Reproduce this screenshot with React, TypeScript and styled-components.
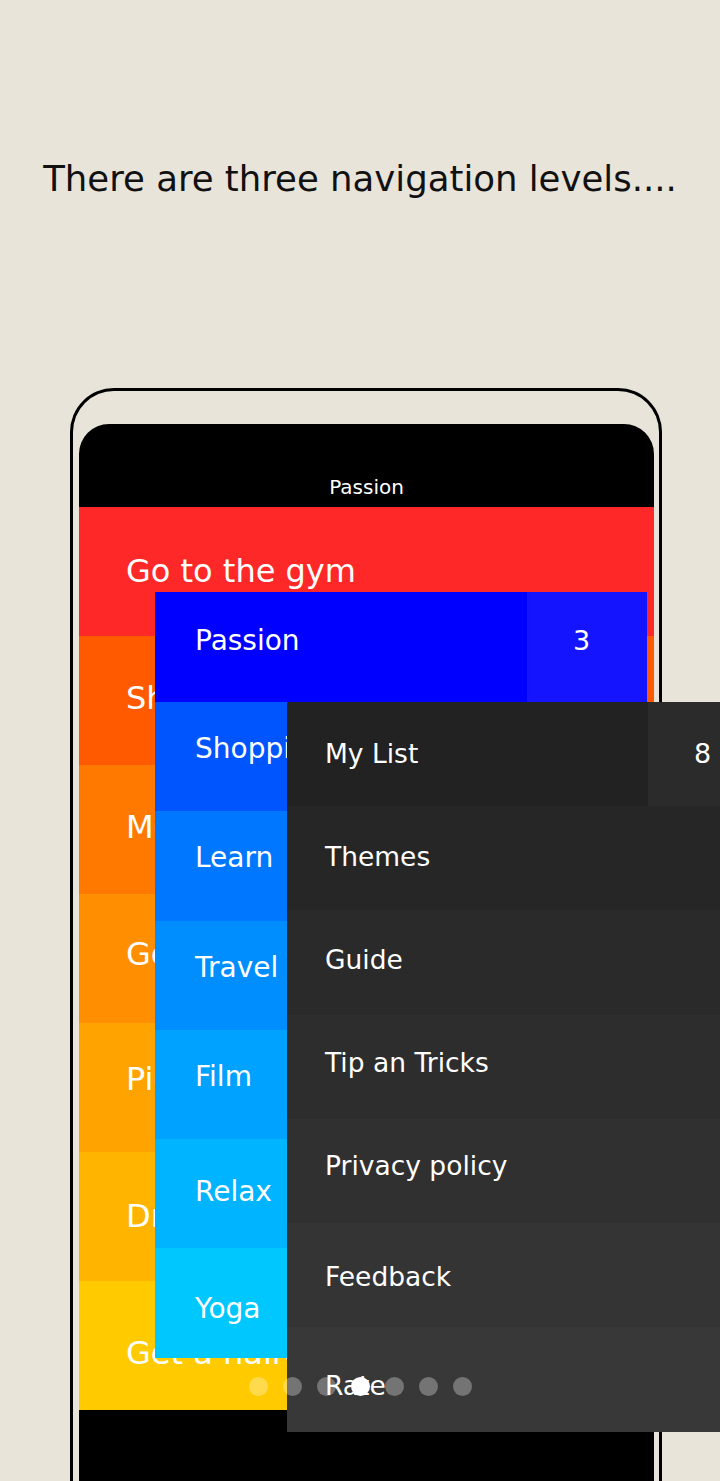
import React from "react";
import styled, { createGlobalStyle } from "styled-components";

const GlobalStyle = createGlobalStyle`
  html, body {
    margin: 0;
    padding: 0;
    background: #e9e4d9;
  }
  body {
    font-family: "DejaVu Sans", "Noto Sans", sans-serif;
  }
`;

// lift: how far the label sits above the row's middle (the lists are mid-slide)
const goals = [
  { label: "Go to the gym", color: "#ff2828", lift: 1 },
  { label: "Shopping list", color: "#ff5a00", lift: 3 },
  { label: "Movies to see", color: "#ff7800", lift: 3 },
  { label: "Go hiking", color: "#ff8e00", lift: 5 },
  { label: "Pick flowers", color: "#ffa300", lift: 9 },
  { label: "Drink water", color: "#ffb500", lift: 1 },
  { label: "Get a haircut", color: "#ffcb00", lift: -7 },
];

const categories = [
  { label: "Shopping", color: "#0055ff", lift: 8 },
  { label: "Learn", color: "#0077ff", lift: 8 },
  { label: "Travel", color: "#008eff", lift: 8 },
  { label: "Film", color: "#00a2ff", lift: 8 },
  { label: "Relax", color: "#00b4ff", lift: 2 },
  { label: "Yoga", color: "#00c8ff", lift: -5 },
];

const menu = [
  { label: "Themes", color: "#262626", lift: 2 },
  { label: "Guide", color: "#2a2a2a", lift: 3 },
  { label: "Tip an Tricks", color: "#2d2d2d", lift: 4 },
  { label: "Privacy policy", color: "#303030", lift: 6 },
  { label: "Feedback", color: "#343434", lift: -1 },
  { label: "Rate", color: "#383838", lift: -6 },
];

const App = () => {
  return (
    <Page>
      <GlobalStyle />
      <Title>There are three navigation levels....</Title>

      <PhoneFrame>
        <Screen>
          <ScreenHeader>Passion</ScreenHeader>
          {goals.map((g) => (
            <GoalRow key={g.label} $bg={g.color} $lift={g.lift}>
              {g.label}
            </GoalRow>
          ))}
          <ScreenFiller />
        </Screen>
      </PhoneFrame>

      <CategoryPanel>
        <CategoryHead>
          <CategoryLabel>Passion</CategoryLabel>
          <CountCell $bg="#1414ff" $lift={7}>
            3
          </CountCell>
        </CategoryHead>
        {categories.map((c) => (
          <CategoryRow key={c.label} $bg={c.color} $lift={c.lift}>
            {c.label}
          </CategoryRow>
        ))}
      </CategoryPanel>

      <MenuPanel>
        <MenuHead>
          <MenuLabel>My List</MenuLabel>
          <CountCell $bg="#2b2b2b" $lift={1}>
            8
          </CountCell>
        </MenuHead>
        {menu.map((m) => (
          <MenuRow key={m.label} $bg={m.color} $lift={m.lift}>
            {m.label}
          </MenuRow>
        ))}
      </MenuPanel>

      <Dots>
        {[0, 1, 2, 3, 4, 5, 6].map((i) => (
          <Dot key={i} $active={i === 3} />
        ))}
      </Dots>
    </Page>
  );
};

export default App;

const liftPadding = (lift: number) =>
  lift >= 0 ? `padding-bottom: ${lift * 2}px;` : `padding-top: ${-lift * 2}px;`;

const Page = styled.div`
  position: relative;
  width: 720px;
  height: 1481px;
  overflow: hidden;
  background: #e9e4d9;
  display: flex;
  flex-direction: column;
`;

const Title = styled.h1`
  margin: 0;
  padding-top: 155px;
  height: 48px;
  line-height: 48px;
  text-align: center;
  font-size: 35.5px;
  font-weight: 400;
  color: #111;
`;

const PhoneFrame = styled.div`
  margin: 185px 0 0 70px;
  flex: 1;
  border: 3px solid #000;
  border-bottom: none;
  border-radius: 44px 44px 0 0;
  padding: 33px 5px 0 6px;
  box-sizing: border-box;
  width: 592px;
  display: flex;
`;

const Screen = styled.div`
  flex: 1;
  display: flex;
  flex-direction: column;
  background: #000;
  border-radius: 30px 30px 0 0;
  overflow: hidden;
`;

const ScreenHeader = styled.div`
  height: 83px;
  display: flex;
  align-items: flex-end;
  justify-content: center;
  box-sizing: border-box;
  padding-bottom: 8px;
  color: #fff;
  font-size: 20px;
  line-height: 24px;
`;

const GoalRow = styled.div<{ $bg: string; $lift: number }>`
  height: 129px;
  flex-shrink: 0;
  box-sizing: border-box;
  display: flex;
  align-items: center;
  padding-left: 47px;
  ${(p) => liftPadding(p.$lift)}
  background: ${(p) => p.$bg};
  color: #fff;
  font-size: 32px;
  white-space: nowrap;
`;

const ScreenFiller = styled.div`
  flex: 1;
  background: #000;
`;

const CategoryPanel = styled.div`
  position: absolute;
  left: 155px;
  top: 592px;
  width: 492px;
  display: flex;
  flex-direction: column;
`;

const CategoryHead = styled.div`
  height: 110px;
  display: flex;
  background: #0000ff;
  color: #fff;
  font-size: 28px;
`;

const CategoryLabel = styled.div`
  flex: 1;
  display: flex;
  align-items: center;
  padding-left: 40px;
  padding-bottom: 14px;
`;

const CountCell = styled.div<{ $bg: string; $lift: number }>`
  width: 120px;
  display: flex;
  align-items: center;
  padding-left: 46px;
  ${(p) => liftPadding(p.$lift)}
  box-sizing: border-box;
  background: ${(p) => p.$bg};
  color: #fff;
  font-size: 27px;
`;

const CategoryRow = styled.div<{ $bg: string; $lift: number }>`
  height: 109.3px;
  box-sizing: border-box;
  display: flex;
  align-items: center;
  padding-left: 40px;
  ${(p) => liftPadding(p.$lift)}
  background: ${(p) => p.$bg};
  color: #fff;
  font-size: 28px;
  white-space: nowrap;
`;

const MenuPanel = styled.div`
  position: absolute;
  left: 287px;
  top: 702px;
  width: 481px;
  display: flex;
  flex-direction: column;
`;

const MenuHead = styled.div`
  height: 104px;
  display: flex;
  background: #222;
  color: #fff;
  font-size: 26.5px;
`;

const MenuLabel = styled.div`
  flex: 1;
  display: flex;
  align-items: center;
  padding-left: 38px;
  padding-bottom: 2px;
`;

const MenuRow = styled.div<{ $bg: string; $lift: number }>`
  height: 104.3px;
  box-sizing: border-box;
  display: flex;
  align-items: center;
  padding-left: 38px;
  ${(p) => liftPadding(p.$lift)}
  background: ${(p) => p.$bg};
  color: #fff;
  font-size: 26.5px;
`;

const Dots = styled.div`
  position: absolute;
  left: 249px;
  top: 1377px;
  display: flex;
  gap: 15px;
`;

const Dot = styled.span<{ $active: boolean }>`
  width: 19px;
  height: 19px;
  border-radius: 50%;
  background: ${(p) => (p.$active ? "#fff" : "rgba(255, 255, 255, 0.3)")};
`;
